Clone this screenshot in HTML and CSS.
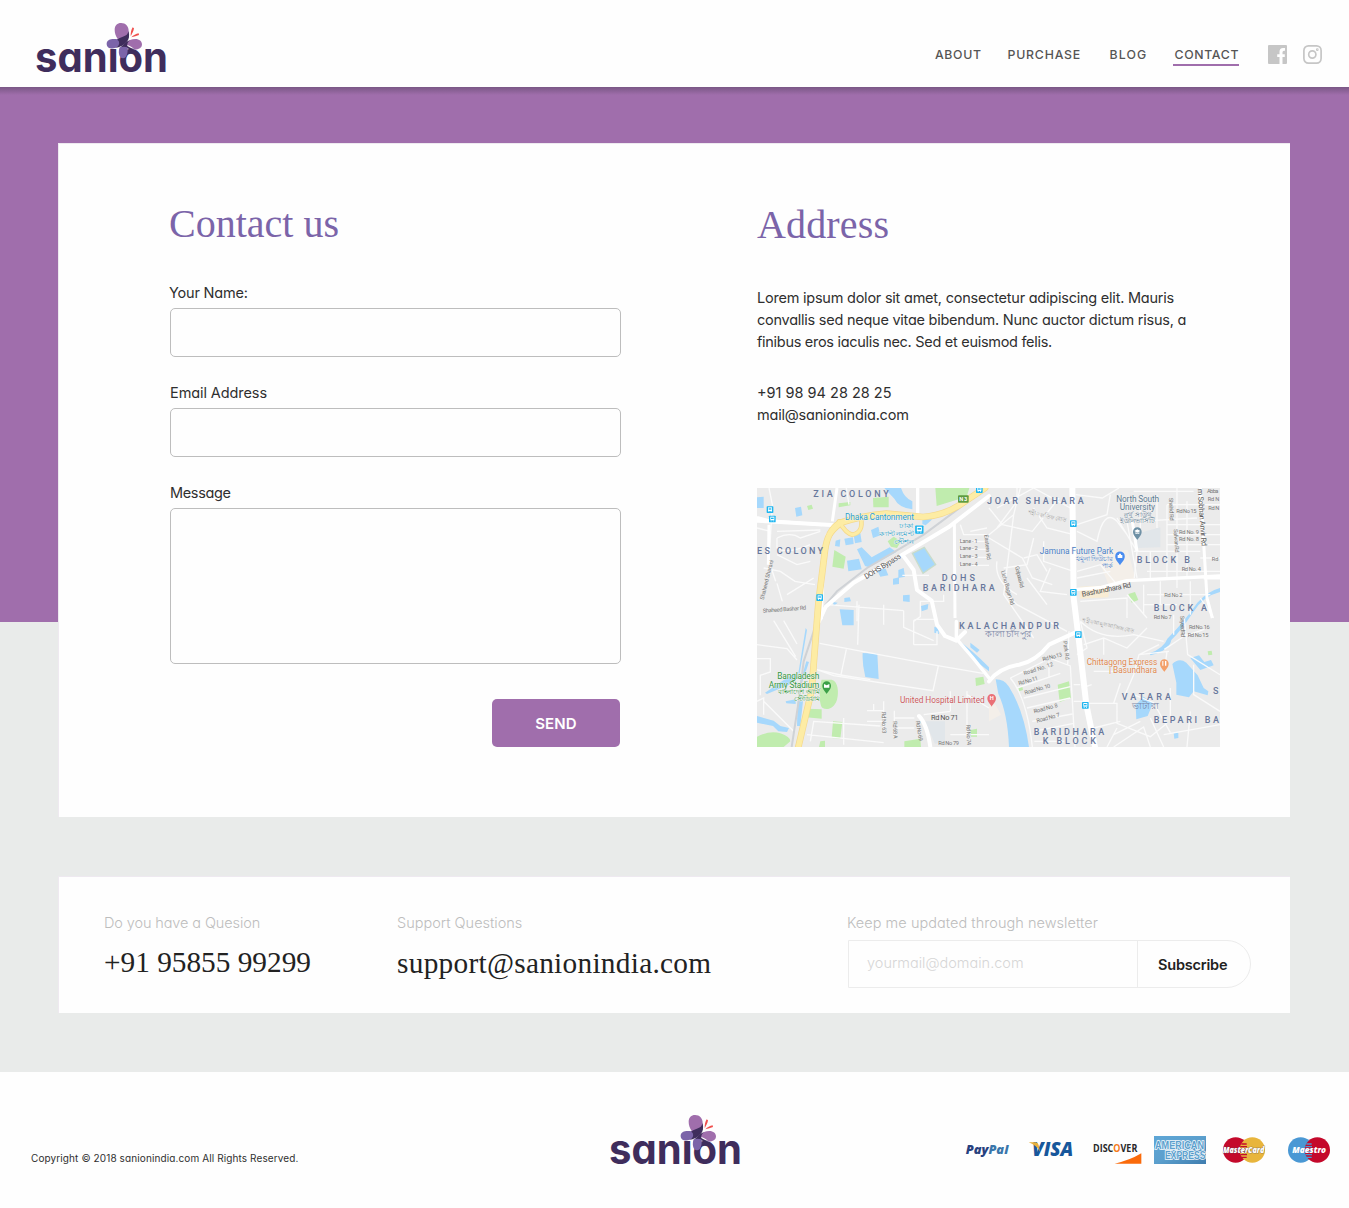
FILE: index.html
```html
<!DOCTYPE html>
<html lang="en">
<head>
<meta charset="utf-8">
<title>Sanion - Contact</title>
<link rel="stylesheet" href="styles.css">
</head>
<body>
<svg class="defs" width="0" height="0" aria-hidden="true">
  <defs>
    <g id="logo">
      <text class="logo-text" x="0" y="49" textLength="133" lengthAdjust="spacingAndGlyphs">sanion</text>
      <g transform="translate(-15 -13) scale(.33333)">
        <path fill="#a06eac" d="M293 87c-6-10-9-18-9-28 0-13 8-20 19-20 14 0 23 10 23 24 0 7-1 11-3 15-8 3-18 8-26 14z"/>
        <path fill="#7b64a9" d="M293 88c-13-3-33-2-33 13 0 17 22 18 36 8 6-5 9-9 10-16z"/>
        <path fill="#3f2d5c" d="M291 89c8-6 20-9 27-13 3-2 6-6 8-13 3 16 1 26-6 33-8 9-21 16-35 18 10-4 14-10 12-19-1-3-3-5-6-6z"/>
        <path fill="#a06eac" d="M316 101c8-10 20-14 30-14 12 0 20 7 20 16 0 11-10 16-22 16-6-7-16-12-28-16z"/>
        <path fill="#3f2d5c" d="M302 112c6-7 16-18 28-22-7 6-9 12-8 18 6 4 16 8 23 10-11 1-20-1-27-5-5 0-10 0-16 2z"/>
        <path fill="#7b64a9" d="M299 112c7-2 15-3 23 0 3 13-1 33-13 33-13 0-15-20-10-33z"/>
        <path fill="#f0504e" d="M332 77c0-10 2-19 6-25l4 3c-1 8-5 15-9 22zM334 82c6-6 14-10 22-12l1 5c-7 3-15 5-23 7z"/>
      </g>
    </g>
    <g id="stop"><rect x="-10" y="-10" width="20" height="20" rx="2" fill="#1fb6f0"/><path fill="#fff" d="M-6-7H6V4H-6z"/><path fill="#1fb6f0" d="M-4-4h8v4h-8z"/><path fill="#fff" d="M-5 5h3v2h-3zM2 5h3v2H2z"/></g>
    <path id="pin" d="M0 20C-4 12-13 6-13-5a13 13 0 0 1 26 0C13 6 4 12 0 20z"/>
  </defs>
</svg>

<header class="header">
  <svg class="logo" width="134" height="56" viewBox="0 0 134 56" role="img" aria-label="sanion"><use href="#logo"/></svg>
  <nav class="nav">
    <a class="nav-about">ABOUT</a>
    <a class="nav-purchase">PURCHASE</a>
    <a class="nav-blog">BLOG</a>
    <a class="nav-contact">CONTACT</a>
    <svg class="facebook" width="19" height="19" viewBox="0 0 19 19"><path fill="#c6c6c6" d="M1 0h17a1 1 0 0 1 1 1v17a1 1 0 0 1-1 1h-3.500v-7h2.300v-2.800h-2.300V7.300q0-1.500 1.500-1.500h1V3h-2q-3.500 0-3.500 4v2.200H9.200V12h2.300v7H1a1 1 0 0 1-1-1V1a1 1 0 0 1 1-1z"/></svg>
    <svg class="instagram" width="19" height="19" viewBox="0 0 19 19" fill="none" stroke="#c6c6c6" stroke-width="1.700"><rect x=".9" y=".9" width="17.200" height="17.200" rx="4.500"/><circle cx="9.300" cy="9.500" r="3.600"/><circle cx="14.300" cy="4.700" r=".5"/></svg>
  </nav>
</header>

<main class="main">
  <section class="card contact">
    <form class="form">
      <h2>Contact us</h2>
      <label class="field"><span class="label-name">Your Name:</span><input type="text"></label>
      <label class="field"><span class="label-email">Email Address</span><input type="text"></label>
      <label class="field"><span class="label-message">Message</span><textarea></textarea></label>
      <button class="send" type="button">SEND</button>
    </form>
    <div class="address">
      <h2>Address</h2>
      <p class="about-text">Lorem ipsum dolor sit amet, consectetur adipiscing elit. Mauris<br><span class="line-two">convallis sed neque vitae bibendum. Nunc auctor dictum risus, a</span><br><span class="line-three">finibus eros iaculis nec. Sed et euismod felis.</span></p>
      <p class="reach">+91 98 94 28 28 25<br><span class="mail-text">mail@sanionindia.com</span></p>
      <svg class="map" width="463" height="259" viewBox="0 0 1389 777">
        <rect width="1389" height="777" fill="#ebebeb"/>
        <!-- parks and buildings -->
        <g fill="#c0ecae">
          <path d="M535 0h102l-8 26-90 28zM348 30l47-4v32h-46zM245 46l35-4v10l-35 6zM150 54l14-4 4 12-14 4zM232 186l34 20-6 36-34-6zM392 160l18-14 22 14-12 20-18-4z"/>
          <path d="M194 575h30c20 4 22 40 16 60-8 26-30 34-44 24-10-10-10-60-2-84zM152 662l42 2v28l-46-4zM228 700l28 2-6 50-26-2zM190 760l14-2v19h-18zM655 570l24-4 4 22-26 6zM442 760l48-8 2 25h-50zM640 726l20-4v24h-18z"/>
          <path d="M0 746q40-20 70-10t30 24l-20 17H0zM1114 318l20-6 10 24-20 8zM902 590l34-10 6 50-34 12zM784 598l12-2 2 10-12 4zM1352 490l12-2 2 12-12 2z"/>
        </g>
        <path fill="#f4efe9" d="M1046 190l66-4 24 88-80 20-26-66zM696 640l20 10 16 30-36 20z"/>
        <path fill="#f8ecd4" d="M968 296l90-4-4 36-86 4z"/>
        <path fill="#e1e6ea" d="M1128 140l82-22v60l-70 2zM504 700h60v60l-30 8z"/>
        <!-- water -->
        <g fill="#a6d8fc">
          <path d="M382 0h50q10 30 34 40v24q-42-6-54-32zM0 28l20-2v34H0zM114 60l18-4 4 26-18 4zM342 126l22-10 6 26-22 8zM262 152l26-4 2 20-24 4zM290 142l20-6 4 26-20 4zM300 184l14-6 30 30 54-30 20 14-82 46-12-4zM270 218l36-6 8 32-40 6zM236 158l14-4-2 22-14-2z"/>
          <path d="M360 246l26-4 8 20-24 4zM424 246l16-6 4 26-20 4zM408 272l18-4v20l-18 2zM438 322l20-2v22l-20-2zM492 354l22-6-2 16-18 6zM262 330l16-2 4 12-20 2zM248 364l42 2v46h-34zM496 94h30l-20 18-10-4zM228 342l14 2-12 10z"/>
          <path stroke="#c9dccb" stroke-width="4" d="M466 196l36-18 34 52-38 26z"/>
          <path d="M317 495l44 2 4 76-40-6q-10-40-8-72zM532 416l12 4 2 18-14-4zM640 464l28 22-8 8-20-16zM598 452q50 36 98 86v12q-60-44-98-98zM0 684l50 14 20 16 26 6-6 12-26-2-16-16-48-10z"/>
          <path d="M24 614l60-40 30-18 6 14-24 20-66 28zM86 640l30-6v14l-28-2zM122 640h16l-8 74h-10zM194 200l16-26-12 80-4 60-18 60 6-70zM146 420l4 6-22 130-4 0zM148 520l8 2-20 60-6 0z"/>
          <path d="M716 574q26 0 40 22 44 70 60 181h-60q-4-100-32-160zM1389 312q-50 12-80 60-40 60-66 84-6 32-62 46l-4-6q44-16 54-44 50-50 90-108 30-34 68-44zM1246 528q20-20 42-4l34 38 18 38 14 10-2 12-42-12-14 18-38-8v-36zM1300 510l26-8 16 20 20-6 8 16-40 14zM1136 650l24-24 28 20-16 38-34 10zM1250 736l14-2v16l-12 2z"/>
        </g>
        <!-- minor roads -->
        <g fill="none" stroke="#fafafa" stroke-width="4">
          <path d="M268 0l8 50M0 90l36 6M36 0l10 50-10 170 20 60M60 150q40-20 70 0l60-20M60 150v30q30 20 100-10M60 200l60 30 40-10M20 240l50 10 44 30 60 10M90 320l80-50M60 286l16 54M0 120l40 10M60 130l130-4M0 470l90 12 30 34M50 398l66 108M80 398l40 70M0 512h40v40l-30 10v60M0 640l20-10v50M20 640l90 90M180 545l70 16 90 14M188 466l350 66 140 24M180 545l50 18 298 45 16-74M252 560l16-76M300 400v-60M210 350l230 18M380 350v60M306 350l-4 120"/>
          <path d="M606 160h90M606 184h90M606 208h90M606 232h90M470 470V400q0-6 10-6h60M470 400l20-14V340h70v-20M540 430v40h-70M610 110l10 30h76M640 130l50-10M436 262h80M440 368v50l90 40M330 668h50v60M350 668v-20M330 700h50M380 640v60M412 668v80M412 690h60M412 720h60M500 680l80-10M580 610v60M630 610v130M630 620l66 40M580 740h116M150 740l230 24M160 760l10-60 200 14M260 690v80"/>
          <path d="M696 60l40 50 90 20 80-100M790 0l-20 80-74 60M720 60l110-60 110 60M770 80l-30 240 90 130M830 150l-20 80-70 10M780 0v40l-60 80M696 150l100 60 30 60 60 20M830 60l40 60 80 20M750 320l30 30 150 80M720 220q-10 60 60 100M860 160v60l90 30M880 240l-30 70 80 10M870 350l-60-80M800 210l40-10 30 50M960 110l90-30 10-60M960 130l60 30q20-100 60-60l30 40M956 20l80 10 50-30M1080 90l60 100M1140 100l180-10M1110 100l30 170"/>
          <path d="M1130 10h180M1230 50h160M1150 60v60M1230 110h159M1230 140h159M1230 170h159M1230 50v220M1200 20v100M1130 190h200M1260 0v300M1290 40v230M1330 210h59M1170 250h219M1180 190v80M1140 190l-8 80M960 250l70-20 50 60M960 270l100-20M970 340l140-10v60M1110 320l60 70M1160 290v90M1170 320h190M1210 280v70M1300 280v100M1160 350h100M1330 330l40 60M1250 380v60"/>
          <path d="M970 400q60 60 160 40l90 20M970 400l20 80-30 20M980 470l60-20 70 30 60-60M1040 450v50M1100 630l30-70 16-60 60-30M1146 500l90-10M1010 550h60M990 646h90v60l100 40 50-40M1070 646l20-60M1010 720l80-20M1080 720l-30 57M1070 740l80-40M1230 490l-8 60M1222 484l60-40 60-20M1282 390l10 110 97 60M1310 530v90l79 50M1180 690l40 87M1220 740l169-30M1300 670l-10 107M1130 620l60 24 50 90M1240 600v100M1070 777l90-60 20 60"/>
          <path d="M760 570l120-60M760 570q50 60 66 207M800 630l140-34M780 600l130-44M810 660l130-30M826 700l120-22M830 730l120-24M876 520v50M876 510l64 24 14 243M936 430l-4 100M832 760h90M950 590h20M950 640h30M974 600l30-10"/>
        </g>
        <g fill="none" stroke="#fff" stroke-width="9">
          <path d="M240 0l-14 100M0 88l36 10 160 12M36 110l-2 120M592 104l2 286M1140 190l-14-90M1330 0l20 330 16 60M1340 270h49"/>
        </g>
        <!-- railway -->
        <path fill="none" stroke="#cfd2d6" stroke-width="6" d="M640 36L500 140 330 240 240 310 190 370 140 520 128 620 104 777"/>
        <!-- main roads -->
        <g fill="none" stroke="#fff" stroke-linecap="round" stroke-linejoin="round">
          <path stroke-width="12" d="M0 98l236 14M696 24L574 118 436 200 290 284 206 356 186 400M436 200l34 46 10 60 44 32 16 72 24 34 34 14 26-26"/>
          <path stroke-width="10" d="M598 452q50 56 98 118M598 400v50M1389 264l-280 14-76 20-72 6M482 0v86"/>
          <path stroke-width="12" d="M192 390l4-120 16-130M696 580q30-40 90-50 50-10 90-60l86-40M486 684q24 24 34 93"/>
          <path stroke-width="18" d="M946 0l4 330 16 130 22 190 26 127"/>
        </g>
        <g fill="none" stroke-linecap="round" stroke-linejoin="round">
          <path stroke="#f5d98c" stroke-width="20" d="M124 777l40-170 20-260 20-160q8-60 44-82 60-20 140-28 60 6 110 10 60-4 110-36l76-51"/>
          <path stroke="#f5d98c" stroke-width="14" d="M220 140q40-52 92-50 8 44-26 50-20-4-40-40"/>
          <path stroke="#fdeca4" stroke-width="16" d="M124 777l40-170 20-260 20-160q8-60 44-82 60-20 140-28 60 6 110 10 60-4 110-36l76-51"/>
          <path stroke="#fdeca4" stroke-width="9" d="M220 140q40-52 92-50 8 44-26 50-20-4-40-40"/>
        </g>
        <!-- transit stops -->
        <use href="#stop" x="39" y="65"/><use href="#stop" x="46" y="93"/><use href="#stop" x="667" y="5"/><use href="#stop" x="188" y="329"/><use href="#stop" x="949" y="107"/><use href="#stop" x="949" y="313"/><use href="#stop" x="964" y="440"/><use href="#stop" x="985" y="652"/>
        <use href="#stop" transform="translate(487 125) scale(1.250)"/>
        <rect x="603" y="22" width="32" height="22" rx="3" fill="#5d9c41"/><text x="607" y="40" textLength="24" class="map-badge">N3</text>
        <!-- place pins -->
        <use href="#pin" x="1141" y="136" fill="#6e90a5"/><path fill="#fff" d="M1141 124l9 5-9 5-9-5zM1135 133l6 3 6-3v4h-12z"/>
        <use href="#pin" transform="translate(1089 210) scale(1.100)" fill="#4a8df0"/><path fill="#fff" d="M1082 201h14v9h-14zM1086 197h6v4h-6z"/>
        <use href="#pin" x="209" y="598" fill="#3ca048"/><path fill="#fff" d="M201 588l8 4 8-4v11h-16z"/>
        <use href="#pin" x="704" y="636" fill="#ea7076"/><text x="698" y="637" class="map-badge">H</text>
        <use href="#pin" x="1222" y="532" fill="#f3a06a"/><path fill="#fff" d="M1216 519h3v14h-3zM1224 519h4v14h-4z"/>
        <!-- district names -->
        <g class="map-area">
          <text x="169" y="28" textLength="226">ZIA COLONY</text><text x="0" y="199" textLength="198">ES COLONY</text>
          <text x="690" y="49" textLength="290">JOAR SHAHARA</text><text x="554" y="280" textLength="100">DOHS</text><text x="497" y="308" textLength="216">BARIDHARA</text>
          <text x="1139" y="226" textLength="160">BLOCK B</text><text x="1190" y="368" textLength="160">BLOCK A</text>
          <text x="606" y="422" textLength="300">KALACHANDPUR</text><text x="1094" y="635" textLength="148">VATARA</text><text x="1368" y="617">S</text><text x="1190" y="704" textLength="196">BEPARI BA</text>
          <text x="830" y="741" textLength="212">BARIDHARA</text><text x="857" y="769" textLength="160">K BLOCK</text>
        </g>
        <g class="map-bangla map-bangla-large"><text x="684" y="448" textLength="140" lengthAdjust="spacingAndGlyphs">কালাচাঁদপুর</text><text x="1124" y="662" textLength="82" lengthAdjust="spacingAndGlyphs">ভাটারা</text></g>
        <!-- place names -->
        <g class="map-place">
          <g fill="#2f9fc9"><text x="264" y="97" textLength="207">Dhaka Cantonment</text><g class="map-bangla"><text x="426" y="120" textLength="44" lengthAdjust="spacingAndGlyphs">ঢাকা</text><text x="366" y="144" textLength="106" lengthAdjust="spacingAndGlyphs">ক্যান্টনমেন্ট</text><text x="410" y="167" textLength="60" lengthAdjust="spacingAndGlyphs">স্টেশন</text></g></g>
          <g fill="#5b7a90"><text x="1078" y="42" textLength="128">North South</text><text x="1088" y="66" textLength="106">University</text><g class="map-bangla"><text x="1102" y="86" textLength="82" lengthAdjust="spacingAndGlyphs">নর্থ সাউথ</text><text x="1090" y="106" textLength="104" lengthAdjust="spacingAndGlyphs">ইউনিভার্সিটি</text></g></g>
          <g fill="#4a80c4"><text x="848" y="199" textLength="221">Jamuna Future Park</text><g class="map-bangla"><text x="956" y="219" textLength="112" lengthAdjust="spacingAndGlyphs">যমুনা ফিউচার</text><text x="1034" y="239" textLength="34" lengthAdjust="spacingAndGlyphs">পার্ক</text></g></g>
          <g fill="#33973f"><text x="61" y="574" textLength="126">Bangladesh</text><text x="35" y="599" textLength="152">Army Stadium</text><g class="map-bangla"><text x="62" y="619" textLength="126" lengthAdjust="spacingAndGlyphs">বাংলাদেশ আর্মি</text><text x="112" y="638" textLength="76" lengthAdjust="spacingAndGlyphs">স্টেডিয়াম</text></g></g>
          <text x="429" y="645" textLength="254" fill="#cc5a5f">United Hospital Limited</text>
          <g fill="#e08850"><text x="989" y="530" textLength="212">Chittagong Express</text><text x="1056" y="554" textLength="144">| Basundhara</text></g>
        </g>
        <!-- street names -->
        <g class="map-street">
          <g class="map-street-main"><text transform="translate(328 274) rotate(-32)" textLength="124">DOHS Bypass</text><text transform="translate(976 326) rotate(-11)" textLength="150">Bashundhara Rd</text><text transform="translate(1322 3) rotate(86)" textLength="172">m Sobhan Anvir Rd</text><text x="522" y="696" textLength="82">Rd No 71</text></g>
          <text x="608" y="164" textLength="54">Lane - 1</text><text x="608" y="187" textLength="54">Lane - 2</text><text x="608" y="210" textLength="54">Lane - 3</text><text x="608" y="234" textLength="54">Lane - 4</text>
          <text transform="translate(682 140) rotate(84)" textLength="76">Eastern Rd</text><text transform="translate(20 336) rotate(-76)" textLength="122">Shaheed Sharani</text><text transform="translate(18 374) rotate(-4)" textLength="130">Shaheed Bashar Rd</text>
          <text transform="translate(732 250) rotate(74)" textLength="106">Lichu Bagan Rd</text><text transform="translate(774 236) rotate(76)" textLength="66">Golpara Rd</text><text transform="translate(1236 30) rotate(88)" textLength="68">Shahid Rd</text><text transform="translate(1250 124) rotate(86)" textLength="70">Safwan Rd</text>
          <text x="1258" y="74" textLength="60">Rd No 15</text><text x="1266" y="137" textLength="60">Rd No. 9</text><text x="1266" y="160" textLength="60">Rd No. 8</text><text x="1274" y="250" textLength="58">Rd No. 4</text><text x="1222" y="327" textLength="54">Rd No 2</text><text x="1190" y="393" textLength="54">Rd No 7</text><text x="1350" y="15" textLength="34">Abba</text><text x="1352" y="38" textLength="35">Rd N</text><text x="1354" y="66" textLength="33">Rd N</text><text x="1364" y="220" textLength="20">Rd</text>
          <text x="1296" y="424" textLength="62">Rd No. 16</text><text x="1292" y="446" textLength="62">Rd No 15</text><text transform="translate(858 520) rotate(-15)" textLength="60">Rd No.13</text><text transform="translate(802 562) rotate(-18)" textLength="92">Road No. 12</text><text transform="translate(786 592) rotate(-16)" textLength="60">Rd No 11</text><text transform="translate(804 620) rotate(-16)" textLength="80">Road No. 10</text><text transform="translate(832 676) rotate(-15)" textLength="74">Road No. 8</text><text transform="translate(840 704) rotate(-15)" textLength="72">Road No. 7</text>
          <text transform="translate(918 460) rotate(82)" textLength="56">Park Rd</text><text transform="translate(374 672) rotate(88)" textLength="64">Rd No 63</text><text transform="translate(408 700) rotate(88)" textLength="52">Rd 68 A</text><text transform="translate(476 700) rotate(80)" textLength="60">Rd No 69</text><text transform="translate(628 710) rotate(88)" textLength="62">Rd No 74</text><text x="544" y="772" textLength="62">Rd No 79</text><text transform="translate(1270 384) rotate(88)" textLength="64">Sayeed Rd</text>
          <g class="map-bangla map-bangla-street"><text transform="translate(812 78) rotate(12)" textLength="116" lengthAdjust="spacingAndGlyphs">শহীদ লতিফ রোড</text><text transform="translate(976 402) rotate(12)" textLength="156" lengthAdjust="spacingAndGlyphs">শহীদ আব্দুল আজিজ রোড</text></g>
        </g>
      </svg>
    </div>
  </section>

  <section class="card support">
    <div class="phone"><p class="muted phone-label">Do you have a Quesion</p><p class="big">+91 95855 99299</p></div>
    <div class="mail"><p class="muted">Support Questions</p><p class="big mail-big">support@sanionindia.com</p></div>
    <div class="news">
      <p class="muted news-label">Keep me updated through newsletter</p>
      <div class="subscribe"><span class="placeholder">yourmail@domain.com</span><span class="subscribe-button">Subscribe</span></div>
    </div>
  </section>
</main>

<footer class="footer">
  <p class="copyright">Copyright © 2018 sanionindia.com All Rights Reserved.</p>
  <svg class="footer-logo" width="134" height="56" viewBox="0 0 134 56" role="img" aria-label="sanion"><use href="#logo"/></svg>
  <svg class="payments" width="399" height="60" viewBox="0 0 1197 180">
    <defs><linearGradient id="amex" x2="1" y2="1"><stop stop-color="#5ea6d6"/><stop offset=".5" stop-color="#5b9fcd"/><stop offset="1" stop-color="#3f7cae"/></linearGradient></defs>
    <text class="pay-name" x="47" y="102" font-size="37" textLength="128" lengthAdjust="spacingAndGlyphs" fill="#27417f">Pay<tspan fill="#3a76ab">Pal</tspan></text>
    <text class="pay-name" x="246" y="108" font-size="56" textLength="124" lengthAdjust="spacingAndGlyphs" fill="#17579b">VISA</text>
    <path fill="#e8b03c" d="M236 67h21q7 0 9 8l4 20q-10-19-34-28z"/>
    <text class="pay-discover" x="429" y="97" font-size="30" textLength="133" lengthAdjust="spacingAndGlyphs" fill="#29292b">DISC<tspan fill="#f47b20">O</tspan>VER</text>
    <path fill="#fa6a0a" d="M494 131q45-10 80-31v31z"/>
    <path fill="url(#amex)" d="M612 48h156v84H612z"/>
    <g class="pay-amex"><text x="615" y="86" textLength="147" lengthAdjust="spacingAndGlyphs">AMERICAN</text><text x="645" y="118" textLength="121" lengthAdjust="spacingAndGlyphs">EXPRESS</text></g>
    <circle cx="857" cy="90" r="38" fill="#c4092b"/><circle cx="907" cy="90" r="38" fill="#e8b53c"/>
    <path stroke="#c4092b" stroke-width="4" d="M874 72h16M871 80h20M870 88h22M870 96h22M871 104h20M874 112h16"/>
    <text class="pay-name pay-light" x="819" y="99" font-size="28" textLength="124" lengthAdjust="spacingAndGlyphs">MasterCard</text>
    <circle cx="1052" cy="90" r="38" fill="#4a98d4"/><circle cx="1102" cy="90" r="38" fill="#c4092b"/>
    <path stroke="#4a98d4" stroke-width="4" d="M1069 72h16M1066 80h20M1065 88h22M1065 96h22M1066 104h20M1069 112h16"/>
    <text class="pay-name pay-light pay-maestro" x="1027" y="99" font-size="28" textLength="101" lengthAdjust="spacingAndGlyphs">Maestro</text>
  </svg>
</footer>
</body>
</html>
```
FILE: styles.css
```css
* { box-sizing: border-box; margin: 0; padding: 0; }

body {
  background: #fefefe;
  color: #2f2f2f;
  font: 14.5px/22px Inter, sans-serif;
  font-feature-settings: "cv11" 1;
}

.defs { position: absolute; }

.logo-text {
  font: 700 41px Inter, sans-serif;
  font-feature-settings: "cv11" 1;
  fill: #3f2d5c;
}

/* header */
.header {
  display: flex;
  justify-content: space-between;
  height: 87px;
  padding: 23px 27px 0 35px;
}
.nav {
  display: flex;
  align-items: flex-start;
  padding-top: 22px;
  font-size: 12.3px;
  line-height: 20px;
  font-weight: 500;
  color: #555;
}
.nav a { height: 20.500px; }
.nav-about { width: 72.500px; letter-spacing: .65px; }
.nav-purchase { width: 102px; letter-spacing: .8px; }
.nav-blog { width: 63.500px; letter-spacing: 1.1px; }
.nav-contact { width: 66px; padding-left: 1.500px; letter-spacing: .65px; border-bottom: 2px solid #a06eac; }
.facebook { margin-left: 29px; }
.instagram { margin-left: 16px; }

/* main */
.main {
  height: 985px;
  padding: 56px 59px 0 58px;
  background:
    linear-gradient(rgba(60, 50, 70, .38), rgba(60, 50, 70, 0)) 0 0 / 100% 8px no-repeat,
    linear-gradient(#a06eac 535px, #e9ebea 535px);
}
.card { display: flex; background: #fefefe; border-top: 1px solid #eee9f0; border-left: 1px solid #eee9f0; }
.contact { height: 674px; padding: 56px 0 0 111px; }
.form { width: 587px; }
h2 {
  font: 40px/48px "Liberation Serif", serif;
  color: #7b64a9;
  margin: 0 0 34px -1px;
}
.address { padding-top: 1px; }
.address h2 { margin: 0 0 38px; letter-spacing: .15px; }
.field { display: block; margin-bottom: 25px; }
.label-name { margin-left: -1px; letter-spacing: -.19px; }
.label-email { letter-spacing: -.09px; }
.label-message { letter-spacing: -.35px; }
input, textarea {
  display: block;
  width: 450.500px;
  height: 49px;
  margin-top: 4px;
  border: 1px solid #bdbdbd;
  border-radius: 5px;
  background: #fefefe;
  resize: none;
}
textarea { height: 156px; }
.send {
  display: block;
  width: 128px;
  height: 48px;
  margin: 35px 0 0 322px;
  border: 0;
  border-radius: 5px;
  background: #a06eac;
  color: #fff;
  font: 600 15px Inter, sans-serif;
  letter-spacing: .15px;
}
.about-text { letter-spacing: -.23px; }
.line-two { letter-spacing: -.25px; }
.line-three { letter-spacing: -.29px; }
.reach { margin-top: 29px; }
.mail-text { letter-spacing: -.2px; }
.map { display: block; margin-top: 62px; font-family: Roboto, sans-serif; font-feature-settings: normal; }

/* map labels */
.map-area { fill: #67779b; font-size: 27px; font-weight: 500; }
.map-place { font-size: 25px; stroke: #f4f4f4; stroke-width: 2px; paint-order: stroke; }
.map-bangla { font-size: 21px; }
.map-bangla-large { font-size: 26px; fill: #7b87a8; }
.map-bangla-street { font-size: 17px; fill: #999; }
.map-street { font-size: 17px; fill: #777; }
.map-street-main { font-size: 22px; fill: #555; }
.map-badge { font-size: 17px; font-weight: 700; fill: #fff; }

/* support */
.support { height: 137px; margin-top: 59px; padding: 35px 0 0 45px; }
.phone { width: 293px; }
.mail { width: 450px; }
.muted { color: #bdbdbd; font-weight: 300; }
.phone-label { letter-spacing: -.11px; }
.news-label { letter-spacing: .04px; }
.big { margin-top: 9px; font: 29.300px/40px "Liberation Serif", serif; color: #222; }
.phone .big { margin-top: 8px; }
.mail-big { letter-spacing: .29px; }
.subscribe {
  display: flex;
  width: 403px;
  height: 48px;
  margin: 6px 0 0 1px;
  border: 1px solid #ececec;
  border-radius: 0 24px 24px 0;
  line-height: 44px;
}
.placeholder { width: 289px; padding-left: 18px; border-right: 1px solid #ececec; color: #d6d6d6; font-weight: 300; }
.subscribe-button { padding-left: 20px; font-weight: 600; letter-spacing: -.2px; line-height: 47px; color: #222; }

/* footer */
.footer { display: flex; height: 136px; }
.copyright { width: 578px; padding: 75px 0 0 31px; font-size: 10px; letter-spacing: .11px; }
.footer-logo { margin: 43px 0 0 31px; }
.payments { margin: 48px 0 0 auto; }
.pay-name { font-family: "Open Sans", sans-serif; font-weight: 800; font-style: italic; }
.pay-discover { font-family: "Open Sans", sans-serif; font-weight: 700; }
.pay-light { fill: #fff; stroke: #55505a; stroke-width: 2px; paint-order: stroke; }
.pay-maestro { stroke: none; }
.pay-amex { font: 700 30px "Liberation Sans", sans-serif; fill: #5b9fcd; stroke: #f2f8fc; stroke-width: 5px; paint-order: stroke; }
```
